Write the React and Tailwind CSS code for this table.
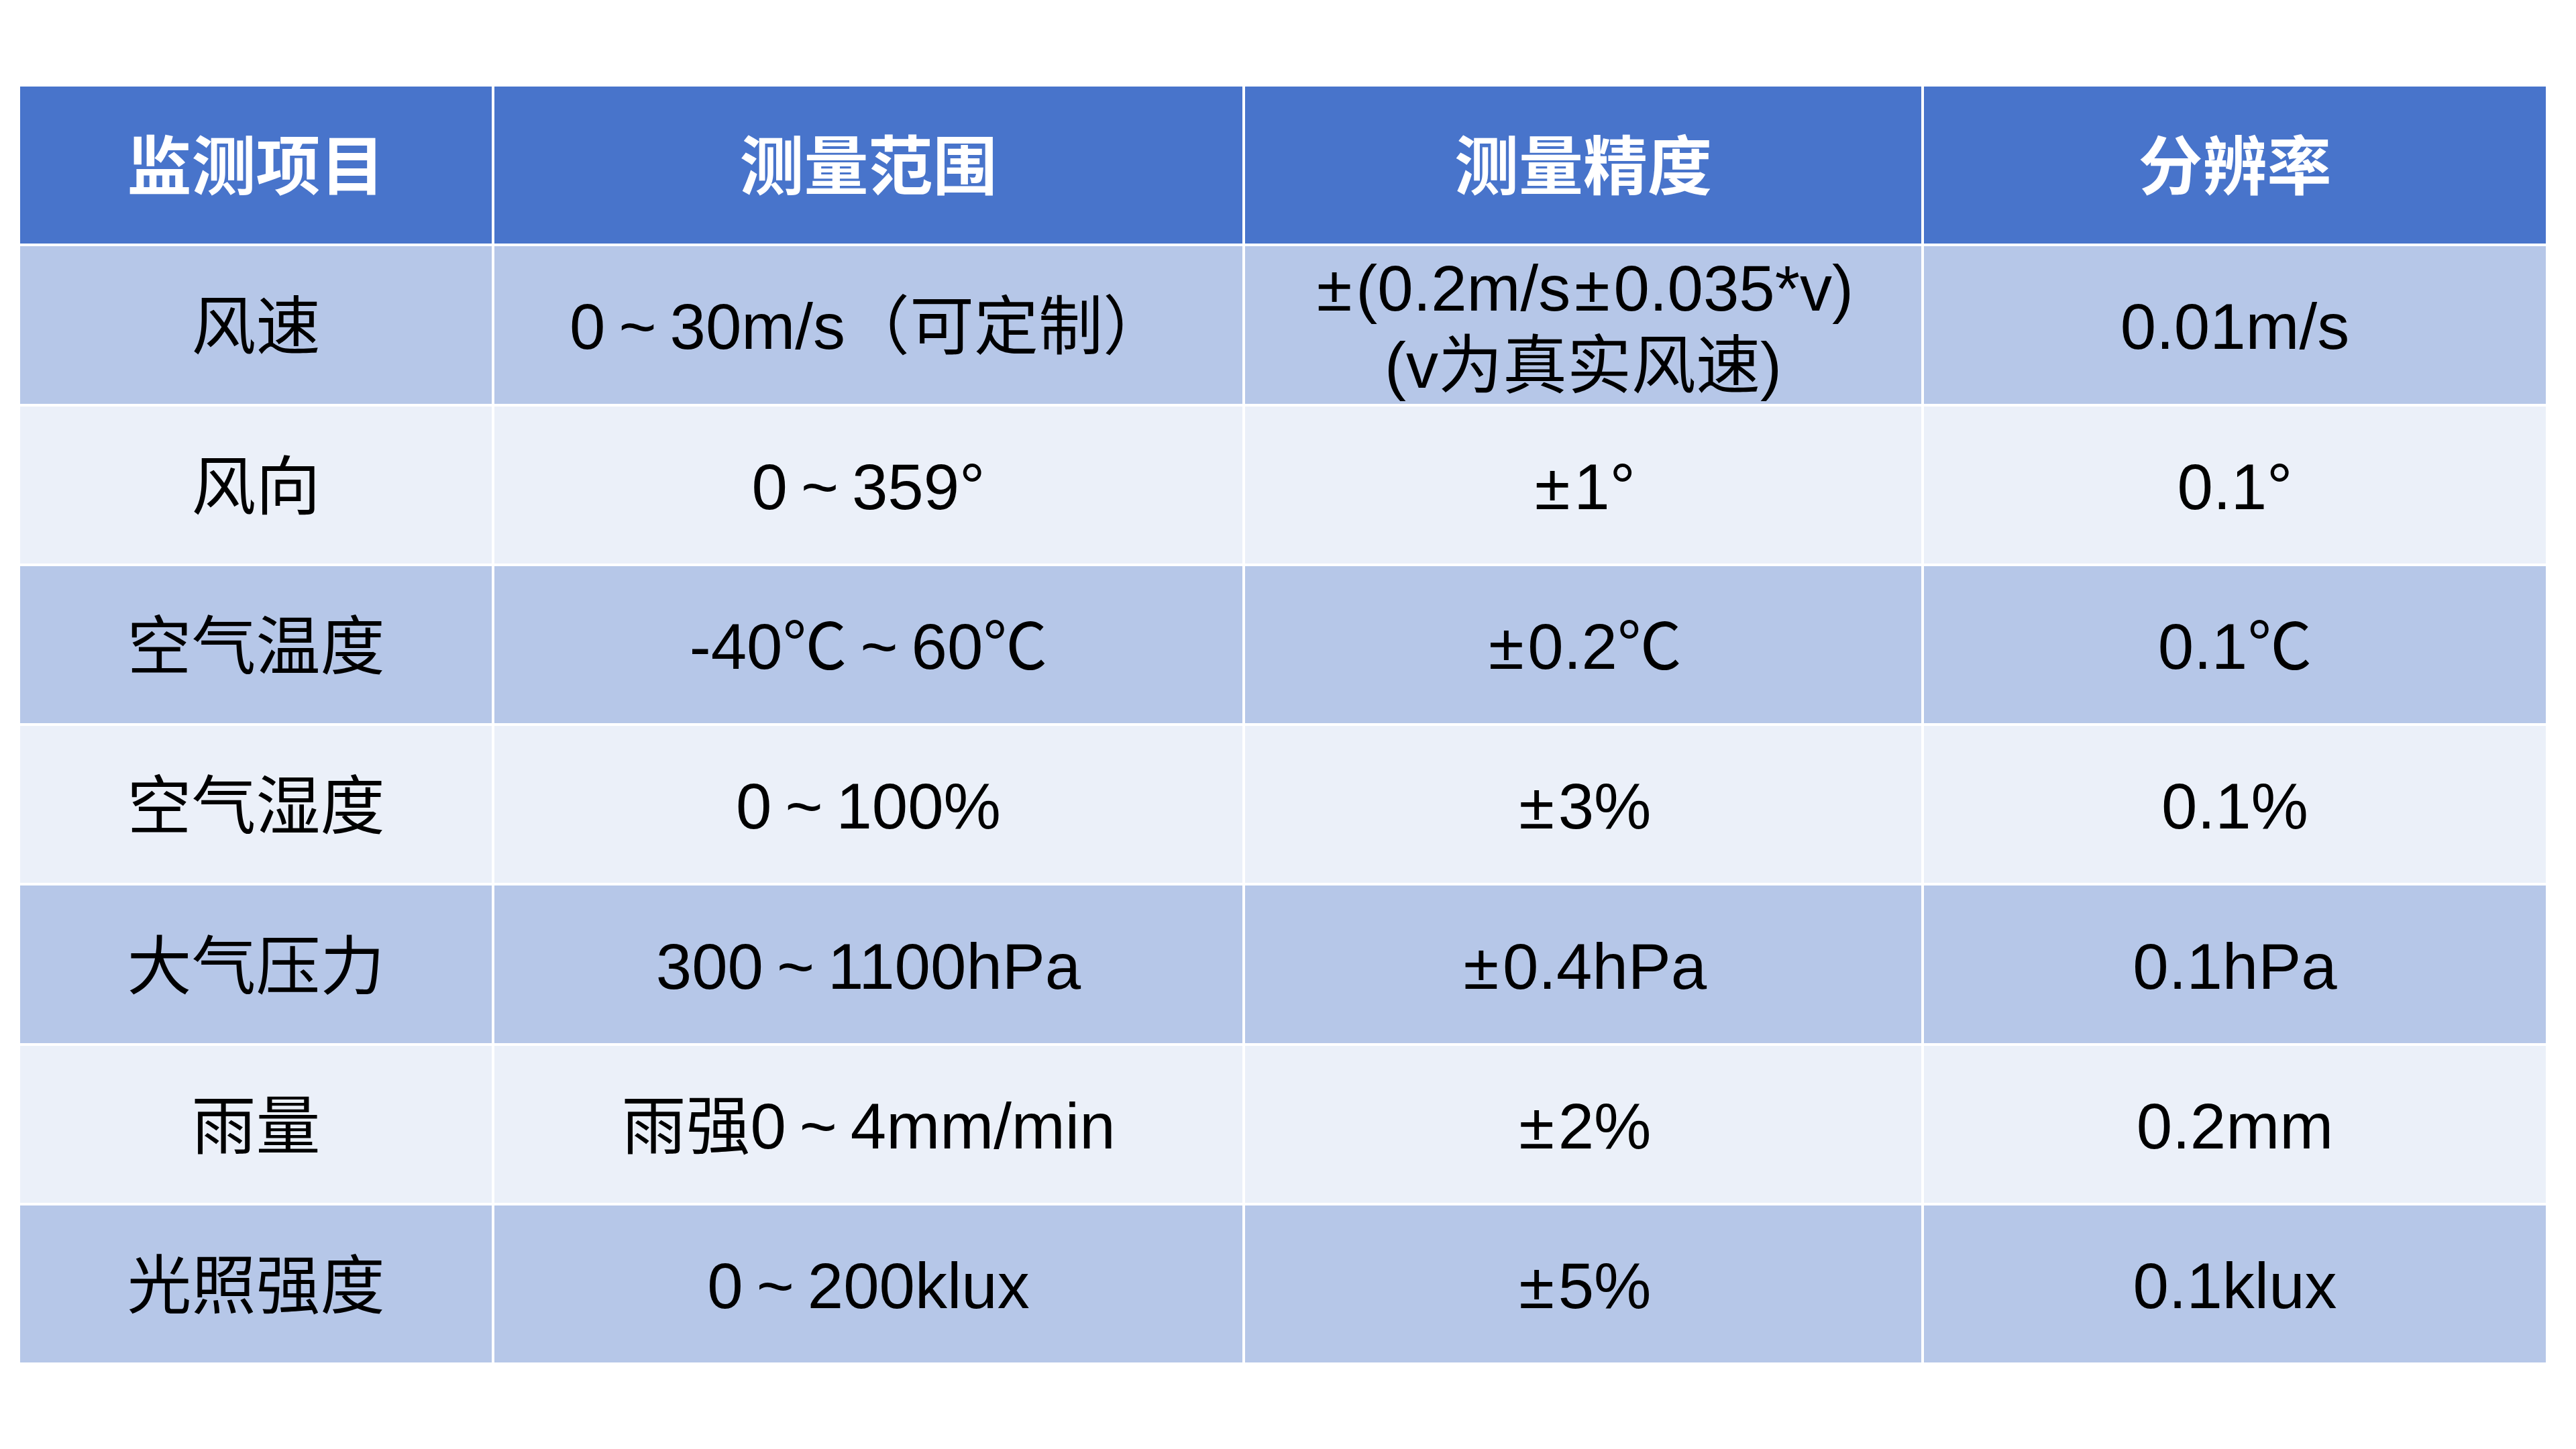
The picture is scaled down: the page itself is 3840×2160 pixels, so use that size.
import React from "react";

const headers = ["监测项目", "测量范围", "测量精度", "分辨率"];

const rows = [
  ["风速", "0～30m/s（可定制）", ["±(0.2m/s±0.035*v)", "(v为真实风速)"], "0.01m/s"],
  ["风向", "0～359°", "±1°", "0.1°"],
  ["空气温度", "-40℃～60℃", "±0.2℃", "0.1℃"],
  ["空气湿度", "0～100%", "±3%", "0.1%"],
  ["大气压力", "300～1100hPa", "±0.4hPa", "0.1hPa"],
  ["雨量", "雨强0～4mm/min", "±2%", "0.2mm"],
  ["光照强度", "0～200klux", "±5%", "0.1klux"],
];

function Txt({ s }) {
  const tokens = s.split(/(～|±)/);
  return (
    <>
      {tokens.map((p, i) => {
        if (p === "～")
          return (
            <span key={i} className="inline-block w-[1em] text-center">
              ~
            </span>
          );
        if (p === "±")
          return (
            <span key={i} className="px-[0.06em]">
              ±
            </span>
          );
        return <React.Fragment key={i}>{p}</React.Fragment>;
      })}
    </>
  );
}

export default function App() {
  return (
    <div
      className="w-[3840px] h-[2160px] bg-white pt-[129px] pl-[30px]"
      style={{ fontFamily: '"Liberation Sans", "Noto Sans CJK SC", sans-serif' }}
    >
      <div className="grid grid-cols-[703px_1115px_1008px_927px] auto-rows-[234.3px] gap-[4px] w-[3765px] bg-white">
        {headers.map((h) => (
          <div
            key={h}
            className="bg-[#4874CB] text-white font-bold text-[96px] leading-[1.2] flex items-center justify-center pt-[5px]"
          >
            {h}
          </div>
        ))}
        {rows.map((r, ri) =>
          r.map((c, ci) => (
            <div
              key={ri + "-" + ci}
              className={
                (ri % 2 === 0 ? "bg-[#B6C7E8]" : "bg-[#EBF0F9]") +
                " text-black text-[96px] leading-[1.2] flex flex-col items-center justify-center text-center whitespace-nowrap pt-[5px]"
              }
            >
              {Array.isArray(c) ? (
                c.map((l, li) => (
                  <div key={li}>
                    <Txt s={l} />
                  </div>
                ))
              ) : (
                <div>
                  <Txt s={c} />
                </div>
              )}
            </div>
          ))
        )}
      </div>
    </div>
  );
}
